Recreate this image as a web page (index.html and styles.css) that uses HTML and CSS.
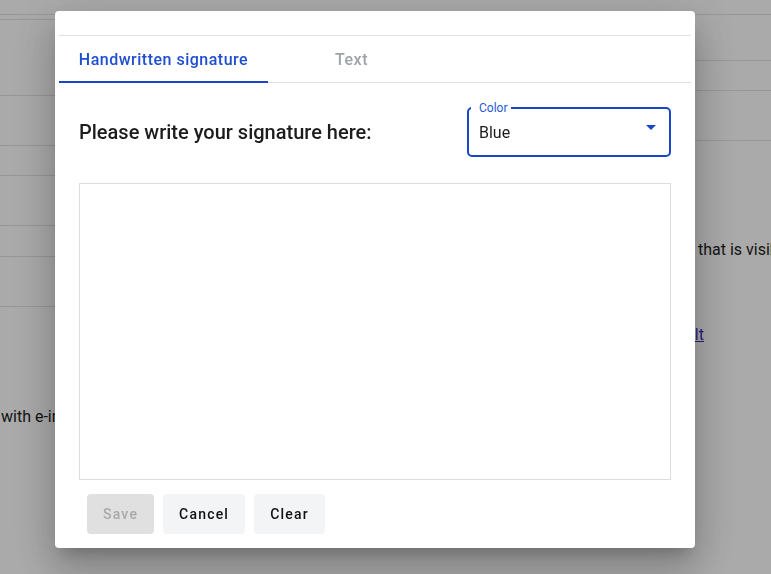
FILE: index.html
```html
<!DOCTYPE html>
<html lang="en">
<head>
<meta charset="utf-8">
<title>Signature</title>
<link rel="stylesheet" href="styles.css">
</head>
<body>
<div class="page">
  <div class="top-rule"></div>
  <div class="cols">
    <div class="col-left">
      <div class="row r1"></div>
      <div class="row r2"></div>
      <div class="row r3"></div>
      <div class="row r4"></div>
      <div class="row r5"></div>
      <div class="row r6"></div>
      <div class="row r7"></div>
      <p class="left-text">with e-invoicing</p>
    </div>
    <div class="col-right">
      <div class="row q1"></div>
      <div class="row q2"></div>
      <div class="row q3"></div>
      <p class="right-text">that is visible on the document</p>
      <p class="right-link"><a href="#">Default</a></p>
    </div>
  </div>
</div>

<div class="overlay">
  <div class="dialog">
    <div class="dialog-head"></div>
    <div class="tabs">
      <div class="tab active">Handwritten signature</div>
      <div class="tab">Text</div>
    </div>
    <div class="dialog-body">
      <div class="sig-row">
        <h2 class="sig-title">Please write your signature here:</h2>
        <div class="select">
          <span class="select-label">Color</span>
          <span class="select-value">Blue</span>
          <svg class="select-arrow" width="10" height="5" viewBox="0 0 10 5"><path d="M0 0 L10 0 L5 5 Z" fill="#1746c8"/></svg>
        </div>
      </div>
      <div class="canvas"></div>
      <div class="actions">
        <button class="btn btn-disabled" disabled>Save</button>
        <button class="btn">Cancel</button>
        <button class="btn">Clear</button>
      </div>
    </div>
  </div>
</div>
</body>
</html>
```

FILE: styles.css
```css
html, body {
  margin: 0;
  padding: 0;
  height: 100%;
  overflow: hidden;
}
body {
  font-family: Roboto, "Liberation Sans", sans-serif;
  color: #222;
  background: #fff;
}
.page {
  width: 100%;
}
.top-rule {
  height: 14px;
  border-bottom: 1px solid #e2e2e2;
}
.cols {
  display: flex;
}
.col-left {
  width: 400px;
  flex-shrink: 0;
}
.col-right {
  flex: 1;
  min-width: 0;
}
.row {
  border-bottom: 1px solid #e2e2e2;
}
.r1 { height: 4px; }
.r2 { height: 75px; }
.r3 { height: 49px; }
.r4 { height: 29px; }
.r5 { height: 49px; }
.r6 { height: 30px; }
.r7 { height: 49px; }
.q1 { height: 45px; }
.q2 { height: 29px; }
.q3 { height: 49px; }
.left-text {
  margin: 100px 0 0 1px;
  font-size: 16px;
  line-height: 20px;
  white-space: nowrap;
}
.right-text {
  margin: 99px 0 0 298px;
  font-size: 16px;
  line-height: 20px;
  white-space: nowrap;
}
.right-link {
  width: 304px;
  text-align: right;
  margin: 65px 0 0 0;
  font-size: 16px;
  line-height: 20px;
}
.right-link a {
  color: #3a2bb8;
}

.overlay {
  position: fixed;
  inset: 0;
  background: rgba(0, 0, 0, 0.335);
  padding: 11px 0 0 55px;
}
.dialog {
  width: 640px;
  height: 537px;
  box-sizing: border-box;
  background: #fff;
  border-radius: 4px;
  padding: 0 4px;
  box-shadow: 0 11px 15px -7px rgba(0,0,0,.2), 0 24px 38px 3px rgba(0,0,0,.14), 0 9px 46px 8px rgba(0,0,0,.12);
  display: flex;
  flex-direction: column;
}
.dialog-head {
  height: 24px;
  border-bottom: 1px solid #e0e0e0;
}
.tabs {
  display: flex;
  border-bottom: 1px solid #e0e0e0;
}
.tab {
  position: relative;
  height: 46px;
  box-sizing: border-box;
  padding-top: 2px;
  line-height: 44px;
  font-size: 16px;
  font-weight: 500;
  letter-spacing: 0.5px;
  color: #9ea3a9;
  text-align: center;
  width: 167px;
}
.tab.active {
  width: 209px;
  color: #1f4fd1;
}
.tab.active::after {
  content: "";
  position: absolute;
  left: 0;
  right: 0;
  bottom: -1px;
  height: 2px;
  background: #1746c8;
}
.dialog-body {
  padding: 0 20px;
}
.sig-row {
  display: flex;
  justify-content: space-between;
  align-items: center;
  margin-top: 24px;
}
.sig-title {
  margin: 0;
  font-size: 20px;
  font-weight: 500;
  color: #1c1c1c;
}
.select {
  position: relative;
  width: 204px;
  height: 50px;
  box-sizing: border-box;
  border: 2px solid #1746c8;
  border-radius: 5px;
  padding: 0 13px 0 10px;
  display: flex;
  align-items: center;
  justify-content: space-between;
}
.select-label {
  position: absolute;
  top: -8px;
  left: 2px;
  padding: 0 4px 0 8px;
  background: #fff;
  font-size: 12px;
  line-height: 14px;
  color: #2a57d6;
}
.select-value {
  font-size: 16px;
  color: #1c1c1c;
}
.select-arrow {
  align-self: flex-start;
  margin-top: 16px;
}
.canvas {
  margin-top: 26px;
  height: 297px;
  box-sizing: border-box;
  border: 1px solid #dedede;
}
.actions {
  display: flex;
  gap: 9px;
  margin-top: 14px;
  padding-left: 8px;
}
.btn {
  height: 40px;
  border: none;
  border-radius: 4px;
  background: #f3f4f6;
  color: #111;
  font-family: Roboto, "Liberation Sans", sans-serif;
  font-size: 14px;
  font-weight: 500;
  letter-spacing: 1.2px;
  padding: 0 16px 1px;
}
.btn-disabled {
  background: #e0e0e0;
  color: #a9a9a9;
}
```
